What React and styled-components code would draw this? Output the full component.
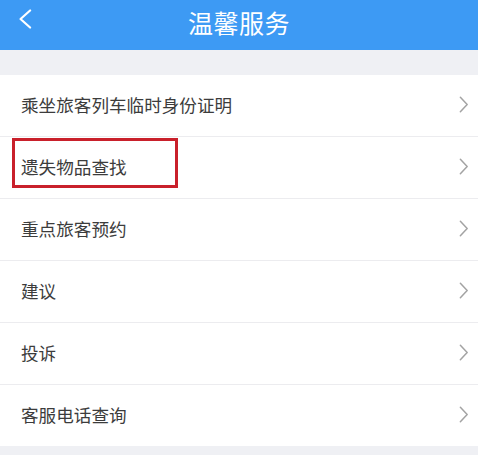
import styled, { createGlobalStyle } from "styled-components"

const GlobalStyle = createGlobalStyle`
    html, body {
        margin: 0;
        padding: 0;
        background: #eff0f4;
        font-family: "Noto Sans CJK SC", "Noto Sans", sans-serif;
    }
`

const items = [
    { label: "乘坐旅客列车临时身份证明" },
    { label: "遗失物品查找", marked: true },
    { label: "重点旅客预约" },
    { label: "建议" },
    { label: "投诉" },
    { label: "客服电话查询" },
]

function Chevron({ left, color, width, height, stroke }) {
    return (
        <svg width={width} height={height} viewBox="0 0 11 20" fill="none" preserveAspectRatio="none">
            <path
                d={left ? "M9.5 1.5L2 10l7.5 8.5" : "M1.5 1.5L9 10l-7.5 8.5"}
                stroke={color}
                strokeWidth={stroke}
                strokeLinecap="round"
                strokeLinejoin="round"
                vectorEffect="non-scaling-stroke"
            />
        </svg>
    )
}

export default function App() {
    return (
        <>
            <GlobalStyle />
            <Page>
                <Header>
                    <BackButton>
                        <Chevron left color="#ffffff" width={14} height={20} stroke={2.2} />
                    </BackButton>
                    <Title>温馨服务</Title>
                </Header>
                <List>
                    {items.map(({ label, marked }) => (
                        <Row key={label}>
                            <Label>{label}</Label>
                            {marked && <Marker />}
                            <Chevron color="#a3a3a3" width={10} height={17} stroke={1.5} />
                        </Row>
                    ))}
                </List>
            </Page>
        </>
    )
}

const Page = styled.div`
    width: 478px;
    height: 455px;
    overflow: hidden;
    background: #eff0f4;
`

const Header = styled.div`
    height: 50px;
    background: #3d9af4;
    display: flex;
    align-items: center;
    justify-content: center;
    position: relative;
`

const BackButton = styled.div`
    position: absolute;
    left: 18px;
    top: 9px;
    display: flex;
`

const Title = styled.div`
    color: #ffffff;
    font-size: 25px;
    letter-spacing: 0.5px;
    margin-top: -6px;
`

const List = styled.div`
    margin-top: 25px;
    background: #ffffff;
`

const Row = styled.div`
    position: relative;
    height: 61px;
    display: flex;
    align-items: center;
    justify-content: space-between;
    padding: 0 9px 3px 21px;
    box-sizing: border-box;
    height: 62px;
    border-bottom: 1px solid #ececef;
    &:last-child {
        border-bottom: none;
        height: 61px;
    }
`

const Label = styled.span`
    font-size: 17.6px;
    color: #3c3c3c;
`

const Marker = styled.div`
    position: absolute;
    left: 12px;
    top: 1px;
    width: 160px;
    height: 44px;
    border: 3px solid #c9202b;
`
